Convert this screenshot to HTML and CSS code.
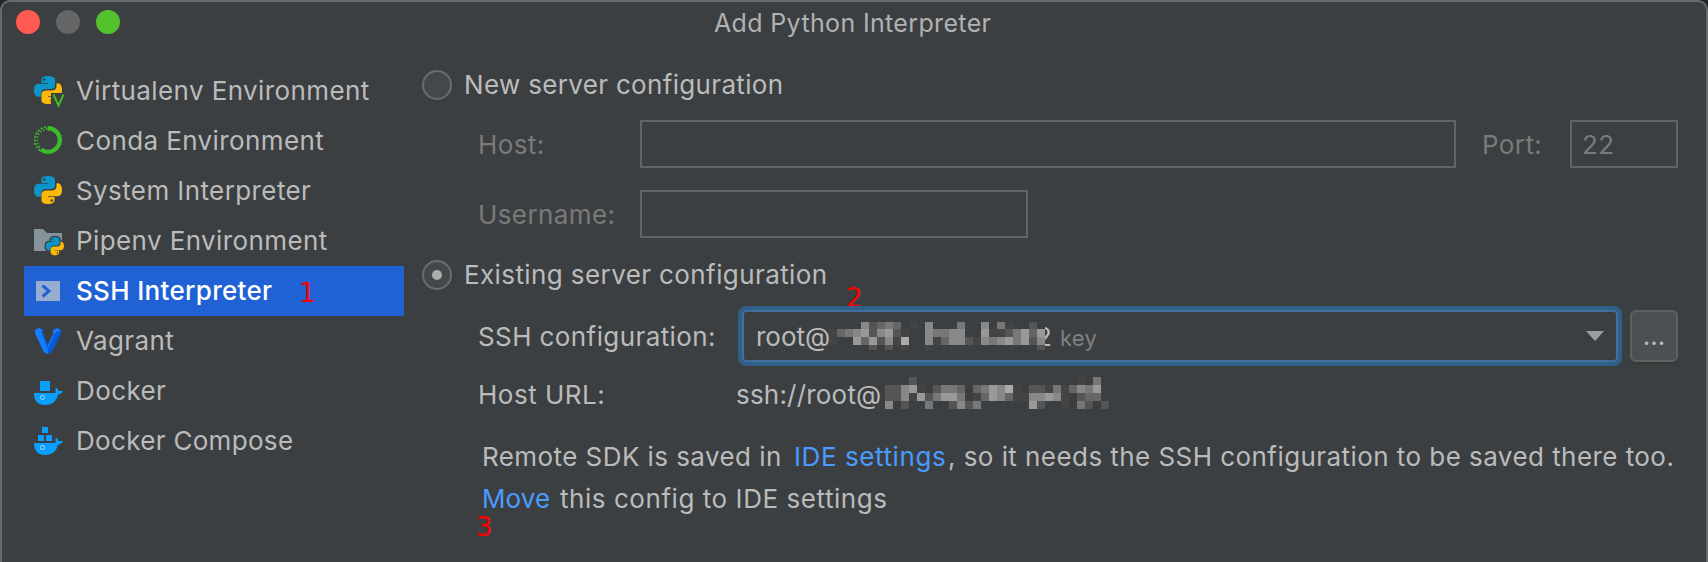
FILE: index.html
```html
<!DOCTYPE html>
<html lang="en">
<head>
<meta charset="utf-8">
<title>Add Python Interpreter</title>
<link rel="stylesheet" href="styles.css">
</head>
<body>
<svg width="0" height="0" class="defs">
  <defs>
    <g id="python">
      <path fill="#0b95c9" d="M14 0c-4 0-6.500 1-6.500 3.700V7H14v.8H4.600C1.500 7.800 0 10.300 0 14.200c0 3.900 1.700 6.500 4.500 6.500H7v-3.200c0-2.700 2.200-4.500 4.800-4.500h5.700c2.100 0 3.500-1.600 3.500-3.600V3.700C21 1.200 18 0 14 0z"/>
      <circle cx="10.300" cy="3.500" r="1.200" fill="#3c3f41"/>
      <path fill="#fdb909" d="M14 28c4 0 6.500-1 6.500-3.700V21H14v-.8h9.400c3.100 0 4.600-2.500 4.600-6.400 0-3.900-1.700-6.500-4.500-6.500h-1v2.900c0 2.700-2.200 4.300-4.700 4.300h-5.900C9.700 14.500 7.500 16 7.500 18v6.300C7.500 26.800 10 28 14 28z"/>
      <circle cx="17.700" cy="24.500" r="1.200" fill="#3c3f41"/>
    </g>
    <g id="whale">
      <path fill="#0a9eff" d="M0 16h21.500v-5.500c2 .8 2.700 2 3 3.500h4.500c-1 2.300-2.600 3.300-5 3.500C22.500 24.500 18 28 11 28 4 28 0 24 0 16z"/>
      <circle cx="8.500" cy="20.500" r="2.100" fill="none" stroke="#a5dcff" stroke-width="1"/>
    </g>
  </defs>
</svg>
<div class="window">
  <header class="titlebar">
    <div class="lights"><i class="light red"></i><i class="light gray"></i><i class="light green"></i></div>
    <h1 class="title">Add Python Interpreter</h1>
  </header>
  <div class="body">
    <nav class="sidebar">
      <div class="item"><svg class="icon python" viewBox="0 0 32 32"><use href="#python"/><path d="M17 17h15v15H17z" fill="#3c3f41"/><path d="M19.500 18.500l5 11 5-11" fill="none" stroke="#3fbb27" stroke-width="2"/></svg><span>Virtualenv Environment</span></div>
      <div class="item"><svg class="icon python" viewBox="0 0 32 32"><path d="M14 2.200a11.800 11.800 0 1 1-7 21.300" fill="none" stroke="#3dba2b" stroke-width="4.400"/><g fill="none" stroke="#3dba2b"><path d="M6 24.500A13 13 0 0 1 14 1" stroke-width="1.800" stroke-dasharray="2 1.600"/><path d="M7 22.500A11 11 0 0 1 14 3" stroke-width="1.800" stroke-dasharray="1.500 1.800" stroke-dashoffset="1.500"/></g></svg><span>Conda Environment</span></div>
      <div class="item"><svg class="icon python" viewBox="0 0 32 32"><use href="#python"/></svg><span>System Interpreter</span></div>
      <div class="item"><svg class="icon" viewBox="0 0 32 32"><path fill="#87939a" d="M0 2h9l4 4h15v18H0z"/><g transform="translate(11.800 10) scale(.65)"><g stroke="#3c3f41" stroke-width="4"><use href="#python"/></g><use href="#python"/></g></svg><span>Pipenv Environment</span></div>
      <div class="item selected"><svg class="icon" viewBox="0 0 32 32"><path fill="#96add0" d="M2 4h24v20H2z"/><path d="M8.500 8.500L15 14l-6.500 5.500" fill="none" stroke="#2162d3" stroke-width="3"/></svg><span>SSH Interpreter</span><b class="note one">1</b></div>
      <div class="item"><svg class="icon" viewBox="0 0 32 32"><path fill="#127eff" d="M1 3l4-2 4 2v4l5 12v8l-4-2L1 6z"/><path fill="#0759d8" d="M7 4l2-1v4l5 11v9l-2-1zM14 18l5-11V4l3 1 5-2v4l-9 18-4 2z"/><path fill="#127eff" d="M1 3l4-2 4 2-2 1 7 19v4l-4-2L1 6zM19 3l4-2 4 2-4.500 2-2.500 3-6 14v-4l5-11z"/></svg><span>Vagrant</span></div>
      <div class="item"><svg class="icon" viewBox="0 0 32 32"><use href="#whale"/><path fill="#0a9eff" d="M6 4h10v10H6z"/></svg><span>Docker</span></div>
      <div class="item"><svg class="icon" viewBox="0 0 32 32"><use href="#whale"/><path fill="#0a9eff" d="M8 0h6v6H8zM4 8h6v6H4zM12 8h6v6h-6z"/></svg><span class="compose">Docker Compose</span></div>
    </nav>
    <main class="main">
      <div class="radio-row"><i class="radio"></i><span class="new">New server configuration</span></div>
      <div class="field-row host"><label class="label">Host:</label><div class="input grow"></div><label class="port-label">Port:</label><div class="input port"><span>22</span></div></div>
      <div class="field-row user"><label class="label">Username:</label><div class="input username"></div></div>
      <div class="radio-row second"><i class="radio on"></i><span>Existing server configuration</span><b class="note two">2</b></div>
      <div class="combo-row"><span class="combo-label">SSH configuration:</span>
        <div class="combo"><span class="root">root@</span><span class="tail">2</span><svg class="mosaic m1" width="216" height="28" data-top="-1" data-cells="....85676.4.8...7..8.74..5.|4678958954..87788..94457969|4..969584a..846885487897958|.....5.5.4..4.............5"></svg><span class="key">key</span><svg class="arrow" width="18" height="10"><path d="M0 0h18L9 10z" fill="#9b9ea0"/></svg></div>
        <button class="more">...</button></div>
      <div class="url-row"><span class="url-label">Host URL:</span><span class="url">ssh://root@</span><svg class="mosaic m2" width="224" height="32" data-top="0" data-cells="...5....................4.7.|55894.5776.6798a4.554746879.|5584957997.469864488984.566.|8.5..7..5857......95..4.75.5"></svg></div>
      <p class="hint"><span class="saved">Remote SDK is saved in</span><a class="ide">IDE settings</a><span class="needs">, so it needs the SSH configuration to be saved there too.</span></p>
      <p class="hint last"><a class="move">Move</a><span class="config">this config to IDE settings</span><b class="note three">3</b></p>
    </main>
  </div>
</div>
<script src="mosaic.js"></script>
</body>
</html>
```
FILE: styles.css
```css
* { box-sizing: border-box; }
body { margin: 0; background: #20242b; font: 26px/30px Inter, "Liberation Sans", sans-serif; letter-spacing: .4px; color: #bbb; overflow: hidden; }
.defs { position: absolute; }
.window { width: 1708px; height: 562px; background: #3c3f41; border: 2px solid #686b6c; border-bottom: 0; border-radius: 10px 10px 0 0; white-space: nowrap; }
.titlebar { height: 56px; position: relative; }
.lights { display: flex; gap: 16px; padding: 8px 0 0 14px; }
.light { width: 24px; height: 24px; border-radius: 50%; }
.red { background: #ff5b52; }
.gray { background: #656668; }
.green { background: #54c22c; }
.title { position: absolute; left: 712px; top: 6px; margin: 0; font-size: 25px; font-weight: 400; letter-spacing: .35px; color: #b0b1b2; }
.body { display: flex; }
.sidebar { width: 380px; margin: 8px 18px 0 22px; }
.item { height: 50px; display: flex; align-items: center; padding-left: 10px; position: relative; }
.item span { margin-left: 10px; }
.compose { letter-spacing: .32px; }
.icon { width: 32px; height: 32px; position: relative; top: 2px; flex: none; }
.python { top: 1px; }
.selected { background: #2062d4; color: #fff; font-weight: 500; letter-spacing: .32px; }
.note { position: absolute; font: 26px/20px "DejaVu Sans", sans-serif; letter-spacing: 0; color: #f00; }
.one { left: 275px; top: 17px; }
.main { flex: 1; padding-top: 12px; }
.radio-row { display: flex; align-items: center; height: 30px; position: relative; }
.new { letter-spacing: .33px; }
.radio { width: 30px; height: 30px; border: 2px solid #6b6b6b; border-radius: 50%; background: #43494a; margin-right: 12px; display: flex; align-items: center; justify-content: center; }
.on::after { content: ""; width: 10px; height: 10px; border-radius: 50%; background: #adadad; }
.field-row { display: flex; align-items: center; height: 48px; padding-left: 56px; color: #7a7a7a; }
.label { width: 162px; padding-top: 1px; }
.input { height: 48px; border: 2px solid #646464; }
.grow { width: 816px; }
.host { margin-top: 20px; }
.port-label { width: 88px; margin-left: 26px; padding-top: 1px; }
.port { width: 108px; padding: 8px 10px; }
.user { margin-top: 22px; }
.username { width: 388px; }
.second { margin-top: 22px; }
.two { left: 424px; top: 28px; }
.combo-row { display: flex; align-items: center; margin-top: 16px; height: 60px; padding-left: 56px; }
.combo-label { width: 260px; padding-top: 2px; }
.combo { width: 884px; height: 60px; border: 4px solid #315f88; border-radius: 8px; box-shadow: inset 0 0 0 2px #3f709f; display: flex; align-items: center; padding-left: 14px; position: relative; }
.root { width: 73px; padding-top: 2px; letter-spacing: 0; }
.tail { width: 16px; margin-left: 207px; padding-top: 2px; }
.mosaic { flex: none; }
.m1 { margin-left: -223px; }
.m2 { margin-bottom: 3px; }
.arrow { margin-left: auto; margin-right: 14px; }
.key { color: #808080; font-size: 22px; margin-left: 15px; padding-top: 4px; letter-spacing: .2px; }
.more { width: 48px; height: 52px; margin-left: 8px; border: 2px solid #5e6060; border-radius: 6px; background: #4c5052; color: #bbb; font: inherit; padding: 0; box-shadow: 0 2px 1px #363839; }
.url-row { display: flex; align-items: center; height: 57px; padding-left: 56px; }
.url-label { width: 258px; padding-top: 1px; letter-spacing: .5px; }
.url { width: 149px; padding-top: 1px; letter-spacing: .2px; }
.hint { margin: 6px 0 0 60px; height: 56px; display: flex; align-items: center; position: relative; }
.last { height: 30px; margin-top: -1px; }
.hint a { color: #4a9bff; }
.saved { width: 312px; letter-spacing: .43px; }
.ide { width: 154px; letter-spacing: .58px; }
.needs { letter-spacing: .44px; }
.move { width: 78px; letter-spacing: .1px; }
.config { letter-spacing: .55px; }
.three { left: -6px; top: 33px; }
```
FILE: mosaic.js
```js
// Each hex digit is the gray level of one 8px censor block; a dot is an empty block.
document.querySelectorAll('.mosaic').forEach(function (svg) {
  var shift = Number(svg.dataset.top);
  svg.dataset.cells.split('|').forEach(function (row, r) {
    row.split('').forEach(function (level, c) {
      var rect = document.createElementNS('http://www.w3.org/2000/svg', 'rect');
      rect.setAttribute('x', c * 8);
      rect.setAttribute('y', r * 8 + shift);
      rect.setAttribute('width', 8);
      rect.setAttribute('height', 8);
      rect.setAttribute('fill', level === '.' ? '#3c3f41' : '#' + level + level + level);
      svg.appendChild(rect);
    });
  });
});
```
